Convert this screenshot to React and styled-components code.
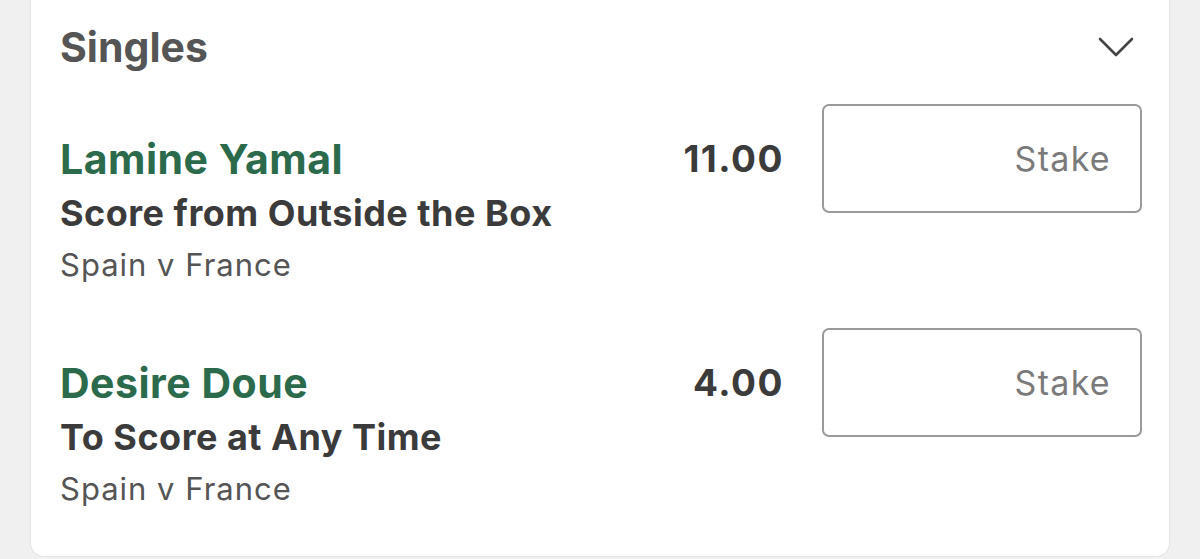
import React from 'react';
import styled, {createGlobalStyle} from 'styled-components';

const GlobalStyle = createGlobalStyle`
    html, body {
        margin: 0;
        padding: 0;
        background: #f0f0f0;
        font-family: Inter, "Noto Sans", "Liberation Sans", sans-serif;
    }
`;

const Page = styled.div`
    padding: 0 30px;
    height: 559px;
    overflow: hidden;
    box-sizing: border-box;
`;

const Card = styled.section`
    background: #fff;
    border: 1px solid #e3e3e3;
    border-top: none;
    border-radius: 0 0 14px 14px;
    padding: 0 27px 42px 29px;
`;

const Header = styled.div`
    display: flex;
    align-items: center;
    justify-content: space-between;
    height: 94px;
`;

const Title = styled.h2`
    margin: 0;
    font-size: 41px;
    font-weight: 700;
    color: #555;
`;

const Toggle = styled.button`
    display: flex;
    border: none;
    background: none;
    padding: 0;
    margin-right: 8px;
    cursor: pointer;
`;

const List = styled.div`
    display: flex;
    flex-direction: column;
    gap: 38px;
    padding-top: 10px;
`;

const Row = styled.div`
    display: flex;
    align-items: flex-start;
`;

const Info = styled.div`
    flex: 1;
    padding-top: 28px;
`;

const Selection = styled.div`
    font-size: 41px;
    font-weight: 700;
    line-height: 54px;
    letter-spacing: 0.5px;
    color: #2b6b4c;
`;

const Market = styled.div`
    font-size: 36px;
    font-weight: 700;
    line-height: 54px;
    letter-spacing: 0.5px;
    color: #3b3b3b;
`;

const Event = styled.div`
    font-size: 31px;
    font-weight: 400;
    line-height: 50px;
    letter-spacing: 1px;
    color: #555;
`;

const Price = styled.div`
    display: flex;
    align-items: center;
    height: 109px;
    gap: 38px;
`;

const Odds = styled.span`
    font-size: 37px;
    font-weight: 700;
    letter-spacing: 1.5px;
    color: #3b3b3b;
`;

const StakeInput = styled.input`
    width: 320px;
    height: 109px;
    box-sizing: border-box;
    border: 2px solid #9a9a9a;
    border-radius: 7px;
    padding: 0 29px;
    text-align: right;
    font-family: inherit;
    font-size: 34px;
    letter-spacing: 1.3px;
    color: #333;
    outline: none;
    &::placeholder {
        color: #7a7a7a;
    }
`;

const bets = [
    {id: 1, selection: 'Lamine Yamal', market: 'Score from Outside the Box', event: 'Spain v France', odds: '11.00'},
    {id: 2, selection: 'Desire Doue', market: 'To Score at Any Time', event: 'Spain v France', odds: '4.00'},
];

const Chevron = () => (
    <svg width="36" height="22" viewBox="0 0 36 22" fill="none">
        <polyline points="2,3 18,19 34,3" stroke="#444" strokeWidth="2.6" strokeLinecap="round" strokeLinejoin="round" />
    </svg>
);

const App = () => {
    return (
        <Page>
            <GlobalStyle />
            <Card>
                <Header>
                    <Title>Singles</Title>
                    <Toggle aria-label="Collapse">
                        <Chevron />
                    </Toggle>
                </Header>
                <List>
                    {bets.map(bet => (
                        <Row key={bet.id}>
                            <Info>
                                <Selection>{bet.selection}</Selection>
                                <Market>{bet.market}</Market>
                                <Event>{bet.event}</Event>
                            </Info>
                            <Price>
                                <Odds>{bet.odds}</Odds>
                                <StakeInput type="text" placeholder="Stake" />
                            </Price>
                        </Row>
                    ))}
                </List>
            </Card>
        </Page>
    );
};

export default App;
